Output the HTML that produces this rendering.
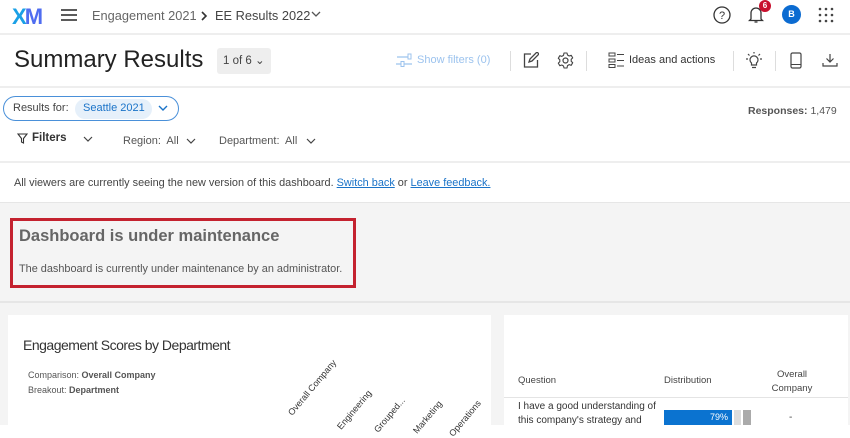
<!DOCTYPE html>
<html><head><style>
*{margin:0;padding:0;box-sizing:border-box}
body{width:850px;height:425px;overflow:hidden;background:#fff;font-family:"Liberation Sans",sans-serif;color:#333;position:relative}
.a{position:absolute;white-space:nowrap}
.hr{position:absolute;left:0;width:850px;height:2px;background:#eee}
a{color:#1a73c8}
</style></head><body>
<!-- top nav -->
<div class="a" style="left:12px;top:4px;font-size:22px;font-weight:bold;letter-spacing:-2px;color:#1aa0e6">X<span style="color:#4f6df0">M</span></div>
<svg class="a" style="left:60px;top:8px" width="18" height="14"><path d="M1 2h16M1 7h16M1 12h16" stroke="#444" stroke-width="1.8"/></svg>
<div class="a" style="left:92px;top:8px;font-size:12.8px;color:#666">Engagement 2021</div>
<svg class="a" style="left:201px;top:11px" width="7" height="10"><path d="M1 1l4 4-4 4" stroke="#333" fill="none" stroke-width="1.6"/></svg>
<div class="a" style="left:215px;top:8px;font-size:12.8px;color:#444">EE Results 2022</div>
<svg class="a" style="left:311px;top:11px" width="10" height="7"><path d="M1 1l4 4 4-4" stroke="#555" fill="none" stroke-width="1.3"/></svg>
<svg class="a" style="left:713px;top:6px" width="18" height="18"><circle cx="9" cy="9" r="8" stroke="#333" fill="none" stroke-width="1.3"/><text x="9" y="13" font-size="11" text-anchor="middle" fill="#333" font-family="Liberation Sans">?</text></svg>
<svg class="a" style="left:748px;top:5px" width="16" height="19"><path d="M3 14V8a5 5 0 0 1 10 0v6l1.5 1.5h-13zM6.5 17h3" stroke="#333" fill="none" stroke-width="1.3"/></svg>
<div class="a" style="left:759px;top:0px;width:12px;height:12px;border-radius:6px;background:#c8102e;color:#fff;font-size:8px;font-weight:bold;text-align:center;line-height:12px">6</div>
<div class="a" style="left:782px;top:5px;width:19px;height:19px;border-radius:10px;background:#0b6bd1;color:#fff;font-size:9px;font-weight:bold;text-align:center;line-height:19px">B</div>
<svg class="a" style="left:818px;top:7px" width="16" height="16" fill="#444"><circle cx="2" cy="2" r="1.3"/><circle cx="8" cy="2" r="1.3"/><circle cx="14" cy="2" r="1.3"/><circle cx="2" cy="8" r="1.3"/><circle cx="8" cy="8" r="1.3"/><circle cx="14" cy="8" r="1.3"/><circle cx="2" cy="14" r="1.3"/><circle cx="8" cy="14" r="1.3"/><circle cx="14" cy="14" r="1.3"/></svg>
<div class="hr" style="top:33px"></div>
<!-- title row -->
<div class="a" style="left:14px;top:46px;font-size:24px;color:#222">Summary Results</div>
<div class="a" style="left:217px;top:48px;width:54px;height:26px;background:#eee;border-radius:3px;font-size:11.5px;color:#444;line-height:26px;padding-left:6px">1 of 6 ⌄</div>
<svg class="a" style="left:396px;top:53px" width="17" height="14"><path d="M1 4h11M1 11h4M8 11h8M0 11h1" stroke="#9cc3ee" stroke-width="1.2" fill="none"/><rect x="12" y="1" width="3" height="5" stroke="#9cc3ee" fill="none"/><rect x="5" y="8.5" width="3" height="5" stroke="#9cc3ee" fill="none"/></svg>
<div class="a" style="left:417px;top:54px;font-size:11px;color:#9cc3ee">Show filters (0)</div>
<div class="a" style="left:510px;top:51px;width:1px;height:20px;background:#ddd"></div>
<svg class="a" style="left:523px;top:52px" width="16" height="16"><path d="M8 2H1.5v13h13V8M6 10l1-3 7-7 2 2-7 7z" stroke="#444" fill="none" stroke-width="1.3"/></svg>
<svg class="a" style="left:557px;top:52px" width="17" height="17"><circle cx="8.5" cy="8.5" r="2.5" stroke="#444" fill="none" stroke-width="1.2"/><path d="M7 1h3l.5 2 1.7 1 2-.7 1.5 2.6-1.5 1.4v2l1.5 1.4-1.5 2.6-2-.7-1.7 1L10 16H7l-.5-2-1.7-1-2 .7-1.5-2.6 1.5-1.4v-2L1.3 6.3l1.5-2.6 2 .7 1.7-1z" stroke="#444" fill="none" stroke-width="1.1" stroke-linejoin="round"/></svg>
<div class="a" style="left:586px;top:51px;width:1px;height:20px;background:#ddd"></div>
<svg class="a" style="left:608px;top:52px" width="17" height="16"><rect x="1" y="1" width="6" height="3" stroke="#444" fill="none"/><rect x="1" y="7" width="6" height="3" stroke="#444" fill="none"/><rect x="1" y="12.5" width="6" height="3" stroke="#444" fill="none"/><path d="M9 2.5h7M9 8.5h7M9 14h7" stroke="#444"/></svg>
<div class="a" style="left:629px;top:54px;font-size:11px;color:#333">Ideas and actions</div>
<div class="a" style="left:733px;top:51px;width:1px;height:20px;background:#ddd"></div>
<svg class="a" style="left:745px;top:52px" width="18" height="17"><path d="M6.5 13v-2a4 4 0 1 1 5 0v2zM7 15.5h4M1 7h2M15 7h2M3 2l1.5 1.5M15 2l-1.5 1.5M9 0v1.5" stroke="#444" fill="none" stroke-width="1.2"/></svg>
<div class="a" style="left:775px;top:51px;width:1px;height:20px;background:#ddd"></div>
<svg class="a" style="left:790px;top:52px" width="12" height="17"><rect x="1" y="1" width="10" height="15" rx="1.5" stroke="#444" fill="none" stroke-width="1.2"/><path d="M1 12.5h10" stroke="#444"/></svg>
<svg class="a" style="left:822px;top:53px" width="16" height="14"><path d="M8 1v8M4.5 5.5 8 9l3.5-3.5M1 10v3h14v-3" stroke="#444" fill="none" stroke-width="1.2"/></svg>
<div class="hr" style="top:86px"></div>
<!-- filters -->
<div class="a" style="left:3px;top:96px;width:176px;height:25px;border:1px solid #4a90d9;border-radius:13px"></div>
<div class="a" style="left:13px;top:102px;font-size:11px;color:#444">Results for:</div>
<div class="a" style="left:75px;top:99px;width:77px;height:20px;border-radius:10px;background:#e6f0fa"></div>
<div class="a" style="left:83px;top:102px;font-size:11px;color:#1a73c8">Seattle 2021</div>
<svg class="a" style="left:158px;top:105px" width="10" height="7"><path d="M1 1l4 4 4-4" stroke="#1a73c8" fill="none" stroke-width="1.4"/></svg>
<div class="a" style="left:748px;top:105px;font-size:10.5px;color:#555"><b>Responses:</b> 1,479</div>
<svg class="a" style="left:17px;top:133px" width="11" height="11"><path d="M1 1h9L6.5 5.5V10L4.5 9V5.5z" stroke="#333" fill="none" stroke-width="1.1"/></svg>
<div class="a" style="left:32px;top:132px;font-size:11.5px;font-weight:bold;color:#333">Filters</div>
<svg class="a" style="left:83px;top:136px" width="10" height="7"><path d="M1 1l4 4 4-4" stroke="#444" fill="none" stroke-width="1.2"/></svg>
<div class="a" style="left:123px;top:135px;font-size:11px;color:#555">Region:&nbsp; All</div>
<svg class="a" style="left:186px;top:138px" width="10" height="7"><path d="M1 1l4 4 4-4" stroke="#444" fill="none" stroke-width="1.2"/></svg>
<div class="a" style="left:219px;top:135px;font-size:11px;color:#555">Department:&nbsp; All</div>
<svg class="a" style="left:306px;top:138px" width="10" height="7"><path d="M1 1l4 4 4-4" stroke="#444" fill="none" stroke-width="1.2"/></svg>
<div class="hr" style="top:161px"></div>
<div class="a" style="left:14px;top:177px;font-size:10.9px;color:#444">All viewers are currently seeing the new version of this dashboard. <a href="#">Switch back</a> or <a href="#">Leave feedback.</a></div>
<!-- gray area -->
<div class="a" style="left:0;top:202px;width:850px;height:223px;background:#f4f4f4;border-top:1px solid #e6e6e6"></div>
<div class="a" style="left:10px;top:218px;width:346px;height:70px;border:3px solid #c4222f"></div>
<div class="a" style="left:19px;top:227px;font-size:16.5px;font-weight:bold;color:#666">Dashboard is under maintenance</div>
<div class="a" style="left:19px;top:263px;font-size:10.9px;color:#555">The dashboard is currently under maintenance by an administrator.</div>
<div class="hr" style="top:301px;background:#e6e6e6"></div>
<!-- cards -->
<div class="a" style="left:8px;top:315px;width:483px;height:110px;background:#fff"></div>
<div class="a" style="left:504px;top:315px;width:344px;height:110px;background:#fff"></div>
<div class="a" style="left:23px;top:337px;font-size:14px;color:#333;letter-spacing:-0.5px">Engagement Scores by Department</div>
<div class="a" style="left:28px;top:370px;font-size:9px;color:#555">Comparison: <b>Overall Company</b></div>
<div class="a" style="left:28px;top:385px;font-size:9px;color:#555">Breakout: <b>Department</b></div>
<div class="a" style="left:286px;top:411px;font-size:9px;color:#333;transform:rotate(-50deg);transform-origin:0 0">Overall Company</div>
<div class="a" style="left:335px;top:425px;font-size:9px;color:#333;transform:rotate(-50deg);transform-origin:0 0">Engineering</div>
<div class="a" style="left:372px;top:428px;font-size:9px;color:#333;transform:rotate(-50deg);transform-origin:0 0">Grouped...</div>
<div class="a" style="left:411px;top:429px;font-size:9px;color:#333;transform:rotate(-50deg);transform-origin:0 0">Marketing</div>
<div class="a" style="left:447px;top:432px;font-size:9px;color:#333;transform:rotate(-50deg);transform-origin:0 0">Operations</div>
<div class="a" style="left:518px;top:375px;font-size:9.5px;color:#444">Question</div>
<div class="a" style="left:664px;top:375px;font-size:9.5px;color:#444">Distribution</div>
<div class="a" style="left:760px;top:368px;width:64px;text-align:center;font-size:9.5px;color:#444;line-height:14px">Overall<br>Company</div>
<div class="a" style="left:504px;top:397px;width:344px;height:1px;background:#e4e4e4"></div>
<div class="a" style="left:518px;top:400px;font-size:10px;color:#333;line-height:14px">I have a good understanding of<br>this company's strategy and</div>
<div class="a" style="left:664px;top:410px;width:68px;height:15px;background:#0b73d0;color:#fff;font-size:9px;text-align:right;padding-right:4px;line-height:15px">79%</div>
<div class="a" style="left:734px;top:410px;width:7px;height:15px;background:#ddd"></div>
<div class="a" style="left:743px;top:410px;width:8px;height:15px;background:#aaa"></div>
<div class="a" style="left:789px;top:412px;font-size:10px;color:#444">-</div>
</body></html>
